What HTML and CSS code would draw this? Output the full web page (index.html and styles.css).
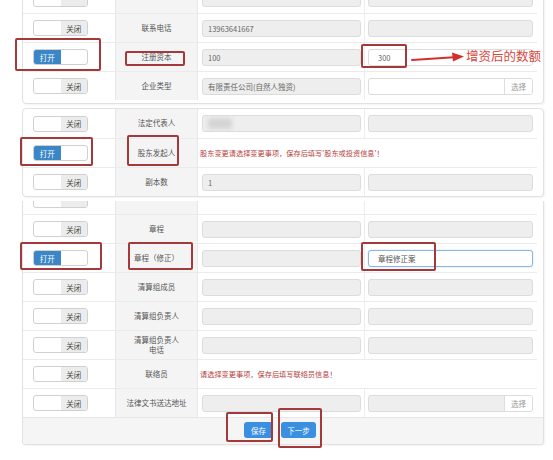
FILE: index.html
```html
<!DOCTYPE html>
<html lang="zh-CN">
<head>
<meta charset="utf-8">
<title>变更登记</title>
<link rel="stylesheet" href="styles.css">
</head>
<body>
<div class="page">

  <section class="panel panel-first">
    <div class="row">
      <div class="c-sw"><span class="switch"><span class="sw-blank"></span><span class="sw-off"></span></span></div>
      <div class="c-label"></div>
      <div class="c-f1"><span class="field"></span></div>
      <div class="c-f2"><span class="field"></span></div>
    </div>
    <div class="row">
      <div class="c-sw"><span class="switch"><span class="sw-blank"></span><span class="sw-off">关闭</span></span></div>
      <div class="c-label">联系电话</div>
      <div class="c-f1"><span class="field">13963641667</span></div>
      <div class="c-f2"><span class="field"></span></div>
    </div>
    <div class="row">
      <div class="c-sw"><span class="switch"><span class="sw-on">打开</span><span class="sw-blank"></span></span></div>
      <div class="c-label">注册资本</div>
      <div class="c-f1"><span class="field">100</span></div>
      <div class="c-f2"><span class="field white">300</span></div>
    </div>
    <div class="row">
      <div class="c-sw"><span class="switch"><span class="sw-blank"></span><span class="sw-off">关闭</span></span></div>
      <div class="c-label">企业类型</div>
      <div class="c-f1"><span class="field">有限责任公司(自然人独资)</span></div>
      <div class="c-f2"><span class="field white"><span class="addon">选择</span></span></div>
    </div>
  </section>

  <section class="panel panel-mid">
    <div class="row">
      <div class="c-sw"><span class="switch"><span class="sw-blank"></span><span class="sw-off">关闭</span></span></div>
      <div class="c-label">法定代表人</div>
      <div class="c-f1"><span class="field"><span class="blur"></span></span></div>
      <div class="c-f2"><span class="field"></span></div>
    </div>
    <div class="row">
      <div class="c-sw"><span class="switch"><span class="sw-on">打开</span><span class="sw-blank"></span></span></div>
      <div class="c-label">股东发起人</div>
      <div class="c-msg">股东变更请选择变更事项，保存后填写'股东或投资信息'！</div>
    </div>
    <div class="row">
      <div class="c-sw"><span class="switch"><span class="sw-blank"></span><span class="sw-off">关闭</span></span></div>
      <div class="c-label">副本数</div>
      <div class="c-f1"><span class="field">1</span></div>
      <div class="c-f2"><span class="field"></span></div>
    </div>
  </section>

  <section class="panel panel-last">
    <div class="cut">
      <div class="row">
        <div class="c-sw"><span class="switch"><span class="sw-blank"></span><span class="sw-off"></span></span></div>
        <div class="c-label"></div>
        <div class="c-f1"></div>
        <div class="c-f2"></div>
      </div>
    </div>
    <div class="row">
      <div class="c-sw"><span class="switch"><span class="sw-blank"></span><span class="sw-off">关闭</span></span></div>
      <div class="c-label">章程</div>
      <div class="c-f1"><span class="field"></span></div>
      <div class="c-f2"><span class="field"></span></div>
    </div>
    <div class="row">
      <div class="c-sw"><span class="switch"><span class="sw-on">打开</span><span class="sw-blank"></span></span></div>
      <div class="c-label">章程（修正）</div>
      <div class="c-f1"><span class="field"></span></div>
      <div class="c-f2"><span class="field focus">章程修正案</span></div>
    </div>
    <div class="row">
      <div class="c-sw"><span class="switch"><span class="sw-blank"></span><span class="sw-off">关闭</span></span></div>
      <div class="c-label">清算组成员</div>
      <div class="c-f1"><span class="field"></span></div>
      <div class="c-f2"><span class="field"></span></div>
    </div>
    <div class="row">
      <div class="c-sw"><span class="switch"><span class="sw-blank"></span><span class="sw-off">关闭</span></span></div>
      <div class="c-label">清算组负责人</div>
      <div class="c-f1"><span class="field"></span></div>
      <div class="c-f2"><span class="field"></span></div>
    </div>
    <div class="row">
      <div class="c-sw"><span class="switch"><span class="sw-blank"></span><span class="sw-off">关闭</span></span></div>
      <div class="c-label">清算组负责人<br>电话</div>
      <div class="c-f1"><span class="field"></span></div>
      <div class="c-f2"><span class="field"></span></div>
    </div>
    <div class="row">
      <div class="c-sw"><span class="switch"><span class="sw-blank"></span><span class="sw-off">关闭</span></span></div>
      <div class="c-label">联络员</div>
      <div class="c-msg">请选择变更事项，保存后填写联络员信息！</div>
    </div>
    <div class="row">
      <div class="c-sw"><span class="switch"><span class="sw-blank"></span><span class="sw-off">关闭</span></span></div>
      <div class="c-label">法律文书送达地址</div>
      <div class="c-f1"><span class="field"></span></div>
      <div class="c-f2"><span class="field"><span class="addon">选择</span></span></div>
    </div>
    <div class="foot">
      <button class="btn btn-save" type="button">保存</button>
      <button class="btn btn-next" type="button">下一步</button>
    </div>
  </section>

  <div class="mark m1"></div>
  <div class="mark m2"></div>
  <div class="mark m3"></div>
  <svg class="arrow" width="58" height="14" viewBox="0 0 58 14">
    <line x1="2" y1="10" x2="44" y2="7.2" stroke="#d2312b" stroke-width="2" stroke-linecap="round"/>
    <polygon points="42,2.5 54,6.5 43,11.5" fill="#d2312b"/>
  </svg>
  <div class="note">增资后的数额</div>
  <div class="mark m5"></div>
  <div class="mark m6"></div>
  <div class="mark m7"></div>
  <div class="mark m8"></div>
  <div class="mark m9"></div>
  <div class="mark m10"></div>
  <div class="mark m11"></div>
</div>
</body>
</html>
```

FILE: styles.css
```css
* { box-sizing: border-box; margin: 0; padding: 0; }
html, body { background: #fff; }
body {
  font-family: "Noto Sans CJK SC", "Noto Sans", sans-serif;
  font-size: 7.5px;
  color: #555;
  width: 553px;
  height: 460px;
  overflow: hidden;
}
.page {
  position: relative;
  width: 553px;
  height: 460px;
  padding-left: 22px;
  overflow: hidden;
}

.panel {
  width: 522px;
  border: 1px solid #e1e1e1;
  border-radius: 4px;
  padding-right: 6px;
  background: #fff;
  box-shadow: 1px 1px 2px rgba(0, 0, 0, 0.05);
}
.panel-first { margin-top: -17px; padding-bottom: 3px; }
.panel-mid { margin-top: 4px; }
.panel-last { margin-top: 4px; border-top: none; border-radius: 0 0 4px 4px; }

.row {
  display: grid;
  grid-template-columns: 92px 83px 167px 172px;
  height: 29px;
  border-top: 1px solid #ebebeb;
}
.panel > .row:first-child { border-top: none; }

.cut {
  height: 13px;
  overflow: hidden;
  display: flex;
  flex-direction: column;
  justify-content: flex-end;
}
.cut .row { flex: none; border-top: none; }

.c-sw {
  display: flex;
  align-items: center;
  padding-left: 10px;
}
.c-label {
  display: flex;
  align-items: center;
  justify-content: center;
  text-align: center;
  background: #f4f4f4;
  border-left: 1px solid #e8e8e8;
  border-right: 1px solid #e8e8e8;
  line-height: 1.4;
  color: #555;
}
.c-f1 {
  display: flex;
  align-items: center;
  padding: 0 3px 0 4px;
  border-right: 1px solid #ececec;
}
.c-f2 {
  display: flex;
  align-items: center;
  padding: 0 4px 0 3px;
}
.c-msg {
  grid-column: 3 / 5;
  display: flex;
  align-items: center;
  padding-left: 2px;
  color: #b5403c;
  font-size: 7.2px;
}

.field {
  flex: 1;
  height: 17px;
  border: 1px solid #dcdcdc;
  border-radius: 3px;
  background: #eeeeee;
  display: flex;
  align-items: center;
  padding-left: 5px;
  color: #666;
  overflow: hidden;
}
.field.white { background: #fff; padding-left: 9px; }
.field.focus {
  background: #fff;
  border-color: #8ab6df;
  box-shadow: 0 0 2px rgba(102, 175, 233, 0.45);
  padding-left: 9px;
  color: #555;
}
.addon {
  margin-left: auto;
  height: 100%;
  width: 28px;
  border-left: 1px solid #dddddd;
  background: #fff;
  display: flex;
  align-items: center;
  justify-content: center;
  color: #999;
}
.blur {
  width: 24px;
  height: 11px;
  background: #d4d4d4;
  border-radius: 2px;
  filter: blur(2px);
}

.switch {
  display: flex;
  width: 55px;
  height: 16px;
  border: 1px solid #d0d0d0;
  border-radius: 3px;
  overflow: hidden;
  background: #fff;
}
.switch > span {
  flex: 1;
  display: flex;
  align-items: center;
  justify-content: center;
}
.sw-off { background: #ececec; color: #444; }
.sw-on { background: #3a86c6; color: #fff; }

.foot {
  height: 27px;
  margin-right: -6px;
  border-top: 1px solid #e6e6e6;
  background: #f5f5f5;
  display: flex;
  justify-content: center;
  align-items: flex-start;
  gap: 8px;
  padding: 4px 6px 0 0;
  border-radius: 0 0 4px 4px;
}
.btn {
  height: 16px;
  border: none;
  border-radius: 3px;
  background: #3b8fe0;
  color: #fff;
  font-family: inherit;
  font-size: 7.5px;
  display: flex;
  align-items: center;
  justify-content: center;
}
.btn-save { width: 29px; }
.btn-next { width: 35px; }

.mark {
  position: absolute;
  border: 2px solid #a3393b;
  border-radius: 2px;
}
.m1 { left: 15px; top: 38px; width: 86px; height: 33px; }
.m2 { left: 125px; top: 51px; width: 60px; height: 15px; }
.m3 { left: 361px; top: 44px; width: 46px; height: 24px; }
.m5 { left: 20px; top: 137px; width: 73px; height: 29px; }
.m6 { left: 127px; top: 135px; width: 52px; height: 31px; }
.m7 { left: 20px; top: 242px; width: 82px; height: 28px; }
.m8 { left: 128px; top: 242px; width: 65px; height: 28px; }
.m9 { left: 361px; top: 242px; width: 75px; height: 29px; }
.m10 { left: 226px; top: 412px; width: 47px; height: 30px; }
.m11 { left: 278px; top: 408px; width: 44px; height: 40px; }

.arrow { position: absolute; left: 410px; top: 50px; }
.note {
  position: absolute;
  left: 466px;
  top: 47px;
  font-size: 12.5px;
  line-height: 18px;
  color: #d5483e;
  white-space: nowrap;
}
```
